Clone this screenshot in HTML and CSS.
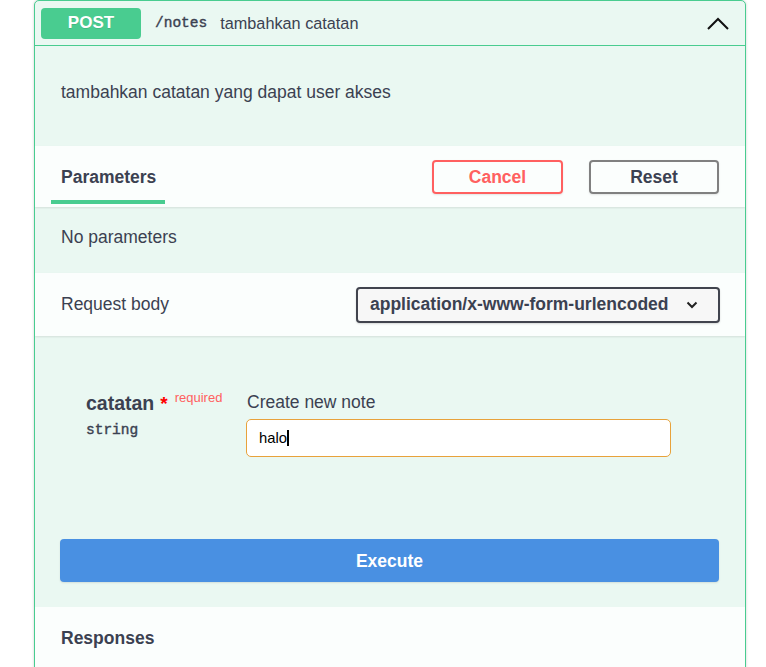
FILE: index.html
```html
<!DOCTYPE html>
<html lang="id">
<head>
<meta charset="utf-8">
<title>POST /notes</title>
<link rel="stylesheet" href="styles.css">
</head>
<body>
<div class="page">
  <div class="opblock">
    <div class="summary">
      <span class="method">POST</span>
      <span class="path">/notes</span>
      <span class="summary-desc">tambahkan catatan</span>
      <svg class="arrow" width="22" height="13" viewBox="0 0 22 13"><polyline points="1,12 11,2 21,12" fill="none" stroke="#111" stroke-width="2"/></svg>
    </div>
    <div class="description">tambahkan catatan yang dapat user akses</div>
    <div class="section-header">
      <div class="tab">Parameters</div>
      <button class="btn cancel">Cancel</button>
      <button class="btn reset">Reset</button>
    </div>
    <div class="no-params">No parameters</div>
    <div class="body-header">
      <span class="body-title">Request body</span>
      <div class="select">
        <span>application/x-www-form-urlencoded</span>
        <svg width="12" height="8" viewBox="0 0 12 8"><polyline points="1.5,1.5 6,6 10.5,1.5" fill="none" stroke="#222" stroke-width="2"/></svg>
      </div>
    </div>
    <div class="params">
      <div class="param-row">
        <div class="param-name">
          <div class="name-line"><span class="name">catatan</span><span class="star">*</span><span class="req">required</span></div>
          <div class="type">string</div>
        </div>
        <div class="param-desc">
          <div class="desc-text">Create new note</div>
          <div class="input">halo<span class="caret"></span></div>
        </div>
      </div>
      <button class="execute">Execute</button>
    </div>
    <div class="responses">Responses</div>
  </div>
</div>
</body>
</html>
```

FILE: styles.css
```css
html, body {
  margin: 0;
  padding: 0;
  background: #fff;
}
body {
  font-family: "Liberation Sans", Arial, sans-serif;
  color: #3b4151;
  height: 667px;
  overflow: hidden;
}
.page {
  padding-left: 34px;
}
.opblock {
  width: 710px;
  border: 1px solid #49cc90;
  border-radius: 5px;
  background: #eaf8f2;
  box-shadow: 0 0 3px rgba(0, 0, 0, 0.19);
  height: 670px;
  overflow: hidden;
}
.summary {
  height: 44px;
  border-bottom: 1px solid #49cc90;
  display: flex;
  align-items: center;
  padding: 0 16px 0 6px;
}
.method {
  width: 100px;
  height: 31px;
  border-radius: 4px;
  background: #49cc90;
  color: #fff;
  font-weight: bold;
  font-size: 17px;
  display: flex;
  align-items: center;
  justify-content: center;
  text-shadow: 0 1px 0 rgba(0, 0, 0, 0.1);
}
.path {
  font-family: "Liberation Mono", "Courier New", monospace;
  font-size: 14.5px;
  margin-left: 14px;
  color: #3b4151;
  -webkit-text-stroke: 0.4px #3b4151;
}
.summary-desc {
  font-size: 16.25px;
  margin-left: 13px;
  flex: 1;
}
.arrow {
  display: block;
}
.description {
  height: 100px;
  box-sizing: border-box;
  padding: 36px 26px 0;
  font-size: 17.5px;
  line-height: 20px;
}
.section-header {
  height: 61px;
  background: rgba(255, 255, 255, 0.8);
  box-shadow: 0 1px 2px rgba(0, 0, 0, 0.1);
  display: flex;
  align-items: center;
  padding: 0 26px 0 16px;
  position: relative;
}
.tab {
  align-self: flex-end;
  margin-bottom: 3px;
  padding: 0 10px 13px;
  width: 94px;
  font-size: 17.5px;
  line-height: 20px;
  font-weight: bold;
  border-bottom: 4px solid #49cc90;
}
.btn {
  height: 34px;
  border-radius: 4px;
  background: transparent;
  font-family: "Liberation Sans", Arial, sans-serif;
  font-weight: bold;
  font-size: 17.5px;
  box-shadow: 0 1px 2px rgba(0, 0, 0, 0.1);
  padding: 1px 0 0;
}
.cancel {
  width: 131px;
  margin-left: auto;
  border: 2px solid #ff6060;
  color: #ff6060;
}
.reset {
  width: 130px;
  margin-left: 26px;
  border: 2px solid #808080;
  color: #3b4151;
}
.no-params {
  height: 66px;
  box-sizing: border-box;
  padding: 20px 26px 0;
  font-size: 17.5px;
  line-height: 20px;
}
.body-header {
  height: 63px;
  background: rgba(255, 255, 255, 0.8);
  box-shadow: 0 1px 2px rgba(0, 0, 0, 0.1);
  display: flex;
  align-items: center;
  padding: 0 25px 0 26px;
  position: relative;
}
.body-title {
  font-size: 17.5px;
  flex: 1;
}
.select {
  width: 364px;
  height: 36px;
  box-sizing: border-box;
  border: 2px solid #41444e;
  border-radius: 4px;
  background: #f7f7f7;
  box-shadow: 0 1px 2px rgba(0, 0, 0, 0.15);
  display: flex;
  align-items: center;
  padding: 0 20px 0 12px;
  font-weight: bold;
  font-size: 17.5px;
  justify-content: space-between;
}
.select svg {
  display: block;
}
.params {
  padding: 56px 26px 25px 25px;
}
.param-row {
  display: flex;
  padding-left: 26px;
}
.param-name {
  width: 160px;
}
.name-line {
  height: 22px;
  display: flex;
  align-items: center;
}
.name {
  font-weight: bold;
  font-size: 19.5px;
}
.star {
  color: #f00;
  font-weight: bold;
  font-size: 19px;
  margin-left: 6px;
  position: relative;
  top: 1px;
}
.req {
  color: #ff6060;
  font-size: 13px;
  margin-left: 7px;
  position: relative;
  top: -6px;
}
.type {
  font-family: "Liberation Mono", "Courier New", monospace;
  font-size: 14.5px;
  margin-top: 7px;
  line-height: 18px;
  -webkit-text-stroke: 0.4px #3b4151;
}
.param-desc {
  width: 425px;
}
.desc-text {
  font-size: 17.5px;
  line-height: 20px;
  margin-left: 1px;
}
.input {
  margin-top: 7px;
  height: 38px;
  box-sizing: border-box;
  border: 1px solid #e8a23b;
  border-radius: 5px;
  background: #fff;
  display: flex;
  align-items: center;
  padding-left: 12px;
  font-size: 14.8px;
  color: #000;
}
.caret {
  display: inline-block;
  width: 2px;
  height: 16px;
  background: #000;
}
.execute {
  display: block;
  width: 100%;
  height: 43px;
  margin-top: 82px;
  border: none;
  border-radius: 4px;
  background: #4990e2;
  color: #fff;
  font-family: "Liberation Sans", Arial, sans-serif;
  font-weight: bold;
  font-size: 17.5px;
  padding: 1px 0 0;
  box-shadow: 0 1px 2px rgba(0, 0, 0, 0.1);
}
.responses {
  background: rgba(255, 255, 255, 0.8);
  padding: 21px 26px 0;
  height: 100px;
  font-weight: bold;
  font-size: 17.5px;
  line-height: 20px;
}
```
